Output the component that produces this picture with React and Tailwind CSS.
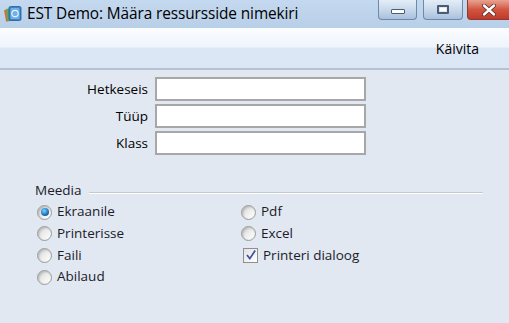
import React from 'react';

function AppIcon() {
  return (
    <svg width="18" height="18" viewBox="0 0 18 18" className="shrink-0">
      <rect x="1" y="4" width="10" height="12" rx="1" fill="#d26a3a" transform="rotate(-10 6 10)" />
      <rect x="2.5" y="3.5" width="10" height="12" rx="1" fill="#6aa84f" transform="rotate(-5 7 9)" />
      <rect x="5" y="1.5" width="12" height="14" rx="1.5" fill="#3d84c6" stroke="#1f5e9c" strokeWidth="0.8" />
      <rect x="6.5" y="3" width="9" height="11" rx="1" fill="#6fb0e6" />
      <circle cx="11" cy="8.5" r="3.2" fill="none" stroke="#e8f3fc" strokeWidth="1.2" />
    </svg>
  );
}

function Radio({ checked, label }) {
  return (
    <div className="flex items-center h-[21.7px] gap-[5px]">
      <span className="w-[15px] h-[15px] rounded-full border border-[#9a9b9c] bg-gradient-to-br from-[#cfd0d1] via-[#eeeeee] to-white flex items-center justify-center shadow-[inset_1px_1px_2px_#b5b5b5]">
        {checked && (
          <span className="w-[8px] h-[8px] rounded-full bg-[radial-gradient(circle_at_40%_35%,#7fd3ff,#1f78be_55%,#0b3d6b)]" />
        )}
      </span>
      <span className="text-[13.5px] text-[#1b1b2a] leading-none">{label}</span>
    </div>
  );
}

function Check({ label }) {
  return (
    <div className="flex items-center h-[21.7px] gap-[5px] pl-[2px]">
      <span className="w-[15px] h-[15px] border border-[#8f8f8f] bg-gradient-to-br from-[#e2e2e2] to-white flex items-center justify-center">
        <svg width="12" height="12" viewBox="0 0 12 12">
          <path d="M2 6 L4.8 9.6 L10.2 1.5" fill="none" stroke="#3c4fa8" strokeWidth="1.7" />
        </svg>
      </span>
      <span className="text-[13.5px] text-[#1b1b2a] leading-none">{label}</span>
    </div>
  );
}

export default function App() {
  const fields = ['Hetkeseis', 'Tüüp', 'Klass'];
  return (
    <div
      className="w-[509px] h-[323px] overflow-hidden flex flex-col bg-[#e1e8f1]"
      style={{ fontFamily: '"Open Sans", "Noto Sans", sans-serif' }}
    >
      {/* title bar */}
      <div className="h-[28px] flex items-center bg-gradient-to-b from-[#c4d9ef] to-[#b8cfe8] pl-[4px]">
        <AppIcon />
        <span className="ml-[5px] text-[15.4px] text-black tracking-[-0.1px]">EST Demo: Määra ressursside nimekiri</span>
        <div className="ml-auto flex items-start self-start h-[22px]">
          <div className="w-[39px] h-[20px] mr-[6px] rounded-b-[4px] border border-t-0 border-[#6f89a8] bg-gradient-to-b from-[#e4edf7] via-[#c9d9ec] to-[#a9c0dc] flex items-center justify-center">
            <span className="w-[14px] h-[5px] border border-[#4a5d75] bg-white rounded-[1px] mt-[4px]" />
          </div>
          <div className="w-[40px] h-[20px] mr-[4px] rounded-b-[4px] border border-t-0 border-[#6f89a8] bg-gradient-to-b from-[#e4edf7] via-[#c9d9ec] to-[#a9c0dc] flex items-center justify-center">
            <span className="w-[12px] h-[9px] border-2 border-[#4a5d75] bg-white rounded-[1px] shadow-[inset_0_0_0_1px_#dfe6ef]" />
          </div>
          <div className="w-[42px] h-[20px] rounded-bl-[4px] border border-t-0 border-r-0 border-[#8a3a2f] bg-gradient-to-b from-[#e8a293] via-[#d2553f] to-[#c0392b] flex items-center justify-center">
            <svg width="16" height="12" viewBox="0 0 16 12">
              <path d="M3 1.5 L13 10.5 M13 1.5 L3 10.5" stroke="#5a2a24" strokeWidth="4" strokeLinecap="round" />
              <path d="M3 1.5 L13 10.5 M13 1.5 L3 10.5" stroke="#ffffff" strokeWidth="2.4" strokeLinecap="round" />
            </svg>
          </div>
        </div>
      </div>

      {/* toolbar */}
      <div className="h-[42px] flex items-center justify-end pr-[30px] border-b-2 border-[#b4c2d3] bg-[linear-gradient(to_bottom,#fbfdff_0%,#eef4fb_48%,#dce7f5_50%,#dbe6f4_100%)]">
        <span className="text-[14px] text-black">Käivita</span>
      </div>

      {/* fields */}
      <div className="grid grid-cols-[148px_211px] gap-x-[7px] gap-y-[3px] mt-[7px]">
        {fields.map((f) => (
          <React.Fragment key={f}>
            <span className="text-[13.5px] text-black text-right self-center">{f}</span>
            <div className="h-[24px] border-2 border-[#a7a7a7] bg-white" />
          </React.Fragment>
        ))}
      </div>

      {/* Meedia */}
      <div className="mt-[25px] pl-[35px] pr-[26px] flex items-center gap-[8px]">
        <span className="text-[13.5px] text-[#1b1b2a]">Meedia</span>
        <div className="flex-1 h-[2px] bg-[#c4c9cf] border-b border-white mt-[6px]" />
      </div>
      <div className="flex pl-[37px] mt-[1px]">
        <div className="w-[204px] flex flex-col">
          <Radio checked label="Ekraanile" />
          <Radio label="Printerisse" />
          <Radio label="Faili" />
          <Radio label="Abilaud" />
        </div>
        <div className="flex flex-col">
          <Radio label="Pdf" />
          <Radio label="Excel" />
          <Check label="Printeri dialoog" />
        </div>
      </div>
    </div>
  );
}
